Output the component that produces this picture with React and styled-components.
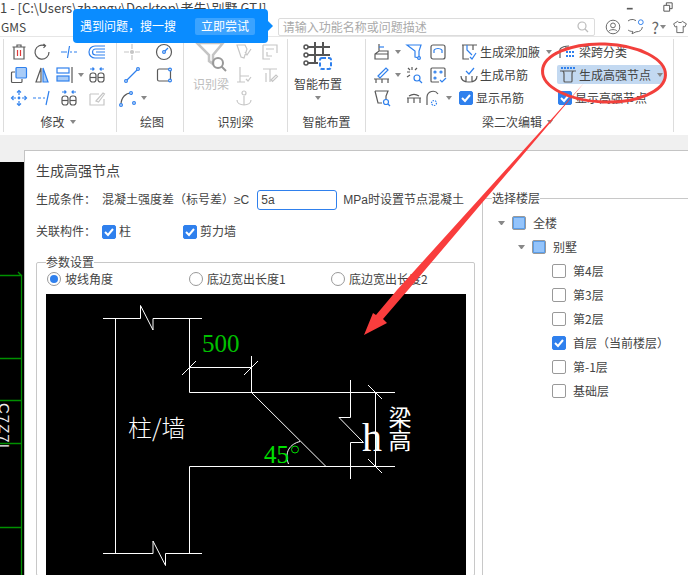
import React from 'react';
import styled, { createGlobalStyle } from 'styled-components';

const GlobalStyle = createGlobalStyle`
  html, body { margin: 0; padding: 0; background: #fff; }
  * { box-sizing: border-box; }
`;

const Page = styled.div`
  position: relative;
  width: 688px;
  height: 575px;
  overflow: hidden;
  display: flex;
  flex-direction: column;
  background: #fff;
  color: #333;
  font: 12px/1 "Noto Sans CJK SC", "Noto Sans", sans-serif;
`;

const TitleBar = styled.div`
  height: 14px;
  margin-bottom: 4px;
  flex: none;
  display: flex;
  align-items: center;
  justify-content: space-between;
  padding-right: 15px;
  font-size: 13px;
  color: #444;
  white-space: nowrap;
`;

const WindowButtons = styled.div`
  display: flex;
  align-items: center;
  gap: 27px;
`;

const MenuBar = styled.div`
  height: 19px;
  flex: none;
  display: flex;
  align-items: center;
  border-bottom: 1px solid #e6e6e6;
`;

const MenuName = styled.span`
  width: 279px;
  padding-left: 1px;
  font-size: 12px;
  color: #444;
`;

const SearchBox = styled.div`
  width: 319px;
  height: 18px;
  display: flex;
  align-items: center;
  justify-content: space-between;
  padding: 0 5px 0 4px;
  border: 1px solid #dcdcdc;
  border-radius: 2px;
  color: #aaa;
`;

const HelpIcons = styled.div`
  display: flex;
  align-items: center;
  gap: 7px;
  margin-left: 10px;
  color: #666;
`;

const HelpMark = styled.span`
  display: flex;
  align-items: center;
  gap: 1px;
  margin-right: -1px;
  font-size: 16px;
`;

const Tooltip = styled.div`
  position: absolute;
  left: 73px;
  top: 9px;
  width: 195px;
  height: 34px;
  display: flex;
  align-items: center;
  gap: 19px;
  padding-left: 7px;
  border-radius: 4px;
  background: #0a8cff;
  color: #fff;

  &::after {
    content: '';
    position: absolute;
    left: 100%;
    top: 12px;
    border: 5px solid transparent;
    border-left-color: #0a8cff;
    border-right-width: 0;
  }
`;

const TooltipButton = styled.span`
  width: 60px;
  height: 17px;
  display: flex;
  align-items: center;
  justify-content: center;
  border-radius: 2px;
  background: rgba(255, 255, 255, 0.2);
`;

const Ribbon = styled.div`
  height: 98px;
  flex: none;
  display: flex;
  padding-left: 3px;
`;

const Group = styled.div`
  width: ${(p) => p.$width}px;
  flex: none;
  display: flex;
  flex-direction: column;
  margin: 2px 0 3px;
  border-left: 1px solid #ddd;
`;

const GroupBody = styled.div`
  height: 71px;
  margin-top: 1px;
  display: flex;
  padding-left: ${(p) => p.$pad || 0}px;
`;

const GroupLabel = styled.div`
  height: 20px;
  margin-top: 1px;
  display: flex;
  align-items: center;
  justify-content: center;
  gap: 5px;
  padding-left: ${(p) => Math.max(p.$shift || 0, 0)}px;
  padding-right: ${(p) => Math.max(-(p.$shift || 0), 0)}px;
  font-size: 12px;
  color: #444;
`;

const ToolGrid = styled.div`
  display: grid;
  grid-template-columns: ${(p) => p.$cols};
  grid-auto-rows: 23px;
`;

const Tool = styled.span`
  display: flex;
  align-items: center;
  justify-content: ${(p) => (p.$start ? 'flex-start' : 'center')};
`;

const Caret = styled.i`
  display: inline-block;
  flex: none;
  margin-left: ${(p) => p.$gap || 0}px;
  border: 3.5px solid transparent;
  border-top: 4px solid #888;
  border-bottom-width: 0;
`;

const BigTool = styled.div`
  width: ${(p) => p.$width}px;
  flex: none;
  display: flex;
  flex-direction: column;
  align-items: center;
  gap: 6px;
  color: ${(p) => (p.$muted ? '#bdbdbd' : '#444')};
`;

const CommandColumn = styled.div`
  display: flex;
  flex-direction: column;
  width: ${(p) => p.$width}px;
  flex: none;
  margin-left: ${(p) => p.$left || 0}px;
`;

const Command = styled.div`
  height: 23px;
  display: flex;
  align-items: center;
  gap: 1px;
  padding-left: ${(p) => p.$pad || 0}px;
  white-space: nowrap;
  color: #444;
`;

const ActiveCommand = styled(Command)`
  height: 19px;
  margin: 2px 0;
  width: 107px;
  background: #c3d9f1;
  border-radius: 2px;
`;

const CheckCommand = styled(Command)`
  gap: 3px;
`;

const Box = styled.span`
  width: 14px;
  height: 14px;
  flex: none;
  display: inline-flex;
  align-items: center;
  justify-content: center;
  border-radius: 2px;
  border: 1px solid ${(p) => (p.$state === 'checked' ? '#2f80ed' : '#999')};
  background: ${(p) => (p.$state === 'checked' ? '#2f80ed' : '#fff')};

  &::before {
    content: '';
    display: ${(p) => (p.$state === 'mixed' ? 'block' : 'none')};
    width: 10px;
    height: 10px;
    background: #94c4fb;
    border: 1px solid #5c9ee8;
  }
`;

const Workspace = styled.div`
  flex: 1;
  min-height: 0;
  display: flex;
  background: #f0f0f0;
`;

const LeftCanvas = styled.div`
  width: 24px;
  flex: none;
  margin-top: 27px;
  background: #000;
`;

const Dialog = styled.div`
  flex: 1;
  min-width: 0;
  margin-top: 15px;
  padding: 9px 0 0 11px;
  background: #fff;
  border-top: 1px solid #c4c4c4;
  border-left: 1px solid #c4c4c4;
`;

const DialogTitle = styled.div`
  height: 20px;
  display: flex;
  align-items: center;
  font-size: 14px;
  color: #444;
`;

const Columns = styled.div`
  margin-top: 10px;
  display: flex;
  gap: 7px;
`;

const LeftColumn = styled.div`
  width: 439px;
  flex: none;
`;

const RightColumn = styled.div`
  width: 260px;
  flex: none;
`;

const FormRow = styled.div`
  height: 20px;
  margin-bottom: 12px;
  display: flex;
  align-items: center;
  font-family: "Liberation Sans", "Noto Sans CJK SC", sans-serif;
  white-space: nowrap;
  color: #444;
`;

const FormLabel = styled.span`
  width: 66px;
  flex: none;
`;

const ValueInput = styled.div`
  width: 80px;
  height: 20px;
  margin: 0 6px 0 8px;
  padding-left: 3px;
  display: flex;
  align-items: center;
  border: 1px solid #2f80ed;
  border-radius: 3px;
`;

const CheckLabel = styled.span`
  width: ${(p) => p.$width}px;
  display: flex;
  align-items: center;
  gap: 3px;
`;

const Fieldset = styled.fieldset`
  margin: 0;
  padding: 0;
  min-width: 0;
  border: 1px solid #c8c8c8;
  border-radius: 2px;
  color: #444;
`;

const Legend = styled.legend`
  margin-left: 9px;
  padding: 0;
  font-size: 12px;
  line-height: 16px;
`;

const RadioRow = styled.div`
  height: 18px;
  padding-left: 10px;
  display: grid;
  grid-template-columns: 142px 142px 1fr;
  align-items: center;
  white-space: nowrap;
`;

const RadioLabel = styled.span`
  display: flex;
  align-items: center;
  gap: 4px;
`;

const Radio = styled.i`
  width: 14px;
  height: 14px;
  flex: none;
  display: flex;
  align-items: center;
  justify-content: center;
  border: 1px solid #999;
  border-radius: 50%;

  &::after {
    content: '';
    display: ${(p) => (p.$on ? 'block' : 'none')};
    width: 8px;
    height: 8px;
    border-radius: 50%;
    background: #2f80ed;
  }
`;

const Diagram = styled.svg`
  display: block;
  width: 420px;
  height: 281px;
  margin: 6px 0 0 9px;
  background: #000;
`;

const Tree = styled.div`
  margin-top: 5px;
  height: 400px;
`;

const TreeRow = styled.div`
  height: 24px;
  display: flex;
  align-items: center;
  padding-left: ${(p) => 15 + p.$level * 20}px;
  font-size: 12px;
  color: #444;
`;

const TreeArrow = styled.i`
  width: 7px;
  margin-right: 7px;
  flex: none;
  border: 3.5px solid transparent;
  border-top: 4px solid ${(p) => (p.$hidden ? 'transparent' : '#888')};
  border-bottom-width: 0;
`;

const TreeText = styled.span`
  margin-left: 7px;
`;

const Annotation = styled.svg`
  position: absolute;
  left: 0;
  top: 0;
  pointer-events: none;
`;

const BLUE = '#2f80ed';
const DARK = '#5a5a5a';
const MUTED = '#c6c6c6';

const Ico = ({ size = 20, color = DARK, box = 20, children }) => (
  <svg width={size} height={size} viewBox={`0 0 ${box} ${box}`} fill="none" stroke={color} strokeWidth="1.2" style={{ flex: 'none' }}>
    {children}
  </svg>
);

const Dot = ({ x, y, c = BLUE }) => <circle cx={x} cy={y} r="1.4" fill="#fff" stroke={c} />;

const ArrowPair = () => (
  <>
    <path d="M3 4h4M5.500 2.500 7 4 5.500 5.500M17 4h-4M14.500 2.500 13 4l1.500 1.500" stroke={BLUE} />
    <rect x="3" y="8" width="6" height="9" rx="2.500" />
    <path d="M3 12.500h6" />
    <rect x="11" y="8" width="6" height="9" rx="2.500" />
    <path d="M11 12.500h6" />
  </>
);

const icons = {
  trash: (
    <>
      <path d="M3.500 5h13M8 5V3h4v2M5 5v12h10V5" />
      <path d="M8.500 8v6M11.500 8v6" stroke="#e03b3b" />
    </>
  ),
  rotate: <path d="M13 3.800A7 7 0 1 0 17 10M11.500 2l2 1.800-2 2" />,
  breakLine: <path d="M2 10h6M11 10h2M15 10h3M10.500 4 8.500 16" stroke={BLUE} />,
  offset: <path d="M18 4H8a6 6 0 0 0 0 12h10M18 7H8.500a3 3 0 0 0 0 6H18M18 10H9" stroke={BLUE} />,
  copy: (
    <>
      <rect x="7" y="2.500" width="10.500" height="10.500" rx="1" fill="#a9ccf7" stroke={BLUE} />
      <path d="M6 7H3.500a1 1 0 0 0-1 1v8.500a1 1 0 0 0 1 1H12a1 1 0 0 0 1-1V14" />
    </>
  ),
  mirror: (
    <>
      <path d="M9 3 4 17h5z" />
      <path d="M11 3l5 14h-5z" fill="#a9ccf7" stroke={BLUE} />
    </>
  ),
  align: (
    <>
      <rect x="2" y="3" width="12" height="5" stroke={BLUE} />
      <rect x="2" y="11" width="12" height="5" fill="#a9ccf7" stroke={BLUE} />
      <path d="M17 2v16" />
    </>
  ),
  split: <ArrowPair />,
  move: (
    <>
      <path d="M10 3v4M10 13v4M3 10h4M13 10h4" stroke={BLUE} />
      <path d="M8 4.500 10 2.500l2 2M8 15.500l2 2 2-2M4.500 8l-2 2 2 2M15.500 8l2 2-2 2" stroke={BLUE} />
      <circle cx="10" cy="10" r="0.800" fill={BLUE} stroke={BLUE} />
    </>
  ),
  extend: <path d="M1 10h3M6 10h3M11 10h2M17 3l-3 14" stroke={BLUE} />,
  note: <path d="M3 6h9M3 6v11h14v-6M9 13l7-8 1.500 1-6 8z" stroke={MUTED} />,
  crossPoint: (
    <>
      <path d="M10 2v5M10 13v5M2 10h5M13 10h5" stroke={MUTED} />
      <circle cx="10" cy="10" r="1.500" fill={MUTED} stroke={MUTED} />
    </>
  ),
  circlePoint: (
    <>
      <circle cx="10" cy="10" r="7.500" />
      <path d="M10 10l4-4" stroke={BLUE} />
      <Dot x={10} y={10} />
    </>
  ),
  line: (
    <>
      <path d="M4 16 16 4" stroke={BLUE} />
      <Dot x={4} y={16} />
      <Dot x={16} y={4} />
    </>
  ),
  rect: (
    <>
      <rect x="3.500" y="4" width="13" height="12" rx="1.500" />
      <Dot x={16} y={4.500} />
      <Dot x={16} y={15.500} />
    </>
  ),
  arc: (
    <>
      <path d="M3 17C3 9 8 5 13 5" />
      <Dot x={3} y={17} />
      <Dot x={13} y={5} />
      <Dot x={16} y={15} />
    </>
  ),
  check1: <path d="M3 3h8l2 4-3 9-3-1zM11 10l2 3 4-6" stroke={MUTED} />,
  find1: <path d="M3 3h14v8M3 3v14h7M6 7h8M7 10v4h5" stroke={MUTED} />,
  bar1: <path d="M6 2v9h9M3 17h8M6 11v6M12 14l2 2 3-4" stroke={MUTED} />,
  bar2: <path d="M3 4h14M10 4v13M6 8v9M11 15l5-5 1.500 1.500-5 5z" stroke={MUTED} />,
  anchor: <path d="M3 12c0 3 3 5 7 5s7-2 7-5M10 8v9M8 5a2 2 0 1 0 4 0 2 2 0 1 0-4 0" stroke={MUTED} />,
  beamStack: (
    <>
      <path d="M7 2v7h7M3 17v-5l4-3h9v8zM3 12h13" />
      <path d="M7 5h5" stroke={BLUE} />
    </>
  ),
  funnel: (
    <>
      <path d="M3 3h14l-2 6v7l-4-1V9z" stroke={BLUE} />
      <Dot x={15} y={16} />
    </>
  ),
  beamBox: (
    <>
      <rect x="3" y="3" width="14" height="14" rx="2" />
      <path d="M6 8c2-2 6-2 8 0M6 8v3M14 8v3" stroke={BLUE} />
    </>
  ),
  pen: (
    <>
      <path d="M6 11 14 3l2 2-8 8z" stroke={BLUE} />
      <path d="M2 14h15M4 14v4M10 14v4M16 14v4" />
    </>
  ),
  scatter: (
    <>
      <path d="M8 2v3M3 7h3M4 3l2 2M3 12l3-2M13 3l-2 2" />
      <circle cx="13" cy="13" r="3" stroke={BLUE} />
      <path d="M15 15l3 3" stroke={BLUE} />
    </>
  ),
  dotsCheck: (
    <>
      <path d="M11 17H4a1 1 0 0 1-1-1V4a1 1 0 0 1 1-1h12a1 1 0 0 1 1 1v8" />
      <circle cx="7" cy="7" r="1" stroke={BLUE} />
      <circle cx="13" cy="7" r="1" stroke={BLUE} />
      <circle cx="7" cy="13" r="1" stroke={BLUE} />
      <path d="M12 15l2 2 4-4" stroke={BLUE} />
    </>
  ),
  funnelFind: (
    <>
      <path d="M3 3h13l-2 5v4M3 3l3 12h4" />
      <circle cx="14" cy="14" r="2.500" stroke={BLUE} />
      <path d="M16 16l2 2" stroke={BLUE} />
    </>
  ),
  arch: <path d="M5 8c3-2 7-2 10 0M3 10h14M4 10v5M10 10v5M16 10v5" />,
  omega: (
    <>
      <path d="M4 17V9a6 6 0 0 1 11 -3" />
      <circle cx="11" cy="15" r="2.500" stroke={BLUE} strokeDasharray="1.500 1" />
    </>
  ),
  haunch: (
    <>
      <path d="M3 3h15M4 3v14h6M14 3v5" />
      <path d="M8 3v5l5 5M11 15l2 2 4-6" stroke={BLUE} />
    </>
  ),
  hanger: (
    <>
      <path d="M2 11c0 4 3 6 8 6s8-2 8-6M7 11v6M13 11v6" />
      <path d="M7 6l3 3 5-6" stroke={BLUE} />
    </>
  ),
  span: (
    <>
      <path d="M2 7c2-2 5-3 9-3M2 7v9M8 5v2" />
      <path d="M8 10h2M11 10h2M14 10h2M8 14h2M11 14h2M14 14h2" stroke={BLUE} strokeWidth="2" />
    </>
  ),
  highNode: (
    <>
      <path d="M3 3h14" stroke={BLUE} strokeDasharray="2 1" strokeWidth="2" />
      <path d="M2 6h16M4 6c1.500 0 2 1 2 3v7c0 1 .5 1 1 1h6c.5 0 1 0 1-1V9c0-2 .5-3 2-3" />
    </>
  ),
};

const Icon = ({ name, color }) => <Ico color={color}>{icons[name]}</Ico>;

const Check = () => (
  <svg width="10" height="10" viewBox="0 0 10 10" fill="none" stroke="#fff" strokeWidth="2">
    <path d="M1 5l3 3 5-6" />
  </svg>
);

const CheckBox = ({ state = 'empty' }) => <Box $state={state}>{state === 'checked' && <Check />}</Box>;

const GridTools = ({ cols, items }) => (
  <ToolGrid $cols={cols}>
    {items.map((item, i) => (
      <Tool key={i} $start={item.start}>
        {item.name && <Icon name={item.name} color={item.color} />}
        {item.caret && <Caret $gap={3} />}
      </Tool>
    ))}
  </ToolGrid>
);

const modifyTools = [
  { name: 'trash' }, { name: 'rotate' }, { name: 'breakLine' }, { name: 'offset' },
  { name: 'copy' }, { name: 'mirror' }, { name: 'align', caret: true }, { name: 'split' },
  { name: 'move' }, { name: 'extend' }, { name: 'split' }, { name: 'note' },
];

const drawTools = [
  { name: 'crossPoint' }, { name: 'circlePoint' },
  { name: 'line' }, { name: 'rect' },
  { name: 'arc', caret: true }, {},
];

const recogniseTools = [
  { name: 'check1', color: MUTED }, { name: 'find1', color: MUTED },
  { name: 'bar1', color: MUTED }, { name: 'bar2', color: MUTED },
  { name: 'anchor', color: MUTED }, {},
];

const beamTools = [
  { name: 'beamStack', caret: true, start: true }, { name: 'funnel' }, { name: 'beamBox' },
  { name: 'pen', caret: true, start: true }, { name: 'scatter' }, { name: 'dotsCheck' },
  { name: 'funnelFind', start: true }, { name: 'arch' }, { name: 'omega', caret: true },
];

const floors = [
  { label: '第4层' },
  { label: '第3层' },
  { label: '第2层' },
  { label: '首层（当前楼层）', state: 'checked' },
  { label: '第-1层' },
  { label: '基础层' },
];

const line = { stroke: '#fff', strokeWidth: 1, fill: 'none' };

const NodeDiagram = () => (
  <Diagram viewBox="46 294 420 281">
    <g {...line}>
      <path d="M103 318.500H140.500V305.500L153 330V318.500H202" />
      <path d="M103 553.500H153V541L165.500 565.500V553.500H202" />
      <path d="M115.500 318.500V553.500M189.500 318.500V392.500H395M189.500 466.500H395M189.500 466.500V553.500" />
      <path d="M189.500 367.500H251.500M251.500 356V392.500M182 375 196 361M244 375 258 361" />
      <path d="M251.500 392.500 326 466.500" />
      <path d="M288.500 464C284 452 290 444 300 441.500" />
      <path d="M350.500 380V417.500H339L363.500 442.500H350.500V479" />
      <path d="M375.500 392.500V466.500M368 385 382 399M368 459 382 473" />
    </g>
    <text x="202" y="352" fill="#00c000" fontFamily="Liberation Serif, serif" fontSize="25">500</text>
    <text x="264" y="463" fill="#00e000" fontFamily="Liberation Serif, serif" fontSize="25">45</text>
    <circle cx="295" cy="449.500" r="3.500" stroke="#00e000" fill="none" />
    <text x="128" y="437" fill="#fff" fontFamily="Noto Sans CJK SC, sans-serif" fontWeight="300" fontSize="24">柱/墙</text>
    <text x="362" y="451" fill="#fff" fontFamily="Liberation Serif, serif" fontSize="40">h</text>
    <text x="400" y="406" fill="#fff" fontFamily="Noto Sans CJK SC, sans-serif" fontSize="23" style={{ writingMode: 'vertical-rl' }}>梁高</text>
  </Diagram>
);

const App = () => (
  <Page>
    <GlobalStyle />
    <TitleBar>
      <span>1 - [C:\Users\zhangy\Desktop\老朱\别墅 GTJ]</span>
      <WindowButtons>
        <Ico size={10} box={12}><path d="M1 8h7" strokeWidth="2" /></Ico>
        <Ico size={10} box={12}><path d="M1 4h7v7H1zM4 4V1h7v7H8" /></Ico>
      </WindowButtons>
    </TitleBar>
    <MenuBar>
      <MenuName>GMS</MenuName>
      <SearchBox>
        <span>请输入功能名称或问题描述</span>
        <Ico size={12} box={12} color="#bbb"><circle cx="5" cy="5" r="4" /><path d="M8 8l3 3" /></Ico>
      </SearchBox>
      <HelpIcons>
        <Ico size={16} color="#666"><circle cx="10" cy="10" r="8.500" /><circle cx="10" cy="8" r="3" /><path d="M4.500 15.500c2-3 9-3 11 0" /></Ico>
        <Ico size={16} color="#666"><path d="M10 2a8 7.500 0 1 0-4 13.500l-1 3 5-2.500a8 7 0 0 0 8-6" /><circle cx="16" cy="4" r="3" stroke={BLUE} /></Ico>
        <HelpMark>?<Caret /></HelpMark>
        <Ico size={16} color="#666"><path d="M7 3 2 6l2 4 2-1v8h8V9l2 1 2-4-5-3c-1 2-5 2-6 0z" /></Ico>
      </HelpIcons>
    </MenuBar>

    <Ribbon>
      <Group $width={113}>
        <GroupBody $pad={3}>
          <GridTools cols="23px 23px 32px 23px" items={modifyTools} />
        </GroupBody>
        <GroupLabel $shift={-4}>修改 <Caret /></GroupLabel>
      </Group>
      <Group $width={67}>
        <GroupBody $pad={3}>
          <GridTools cols="24px 40px" items={drawTools} />
        </GroupBody>
        <GroupLabel $shift={4}>绘图</GroupLabel>
      </Group>
      <Group $width={104}>
        <GroupBody $pad={5}>
          <BigTool $width={44} $muted>
            <Ico size={32} box={32} color="#c4c4c4">
              <path d="M2 3h26L18 15v9l-4-3V15z" strokeWidth="2.500" />
              <circle cx="23" cy="23" r="5" stroke="#999" strokeWidth="2" />
              <path d="M26.500 26.500 31 31" stroke="#999" strokeWidth="2" />
            </Ico>
            <span>识别梁</span>
          </BigTool>
          <GridTools cols="22px 30px" items={recogniseTools} />
        </GroupBody>
        <GroupLabel>识别梁</GroupLabel>
      </Group>
      <Group $width={78}>
        <GroupBody $pad={6}>
          <BigTool $width={48}>
            <Ico size={32} box={32} color="#555">
              <path d="M13 2v20M21 2v14M6 7h22M6 15h22M6 23h10" strokeWidth="2" />
              <circle cx="4" cy="7" r="2" strokeWidth="1.500" />
              <circle cx="4" cy="15" r="2" strokeWidth="1.500" />
              <circle cx="4" cy="23" r="2" strokeWidth="1.500" />
              <rect x="18" y="18" width="11" height="11" rx="2" stroke={BLUE} strokeWidth="2" strokeDasharray="4 2" />
            </Ico>
            <span>智能布置</span>
            <Caret />
          </BigTool>
        </GroupBody>
        <GroupLabel>智能布置</GroupLabel>
      </Group>
      <Group $width={308}>
        <GroupBody $pad={6}>
          <GridTools cols="30px 23px 25px" items={beamTools} />
          <CommandColumn $width={98} $left={9}>
            <Command><Icon name="haunch" />生成梁加腋<Caret $gap={5} /></Command>
            <Command><Icon name="hanger" />生成吊筋</Command>
            <CheckCommand><CheckBox state="checked" />显示吊筋</CheckCommand>
          </CommandColumn>
          <CommandColumn $width={110}>
            <Command $pad={1}><Icon name="span" />梁跨分类</Command>
            <ActiveCommand $pad={1}><Icon name="highNode" />生成高强节点<Caret $gap={5} /></ActiveCommand>
            <CheckCommand $pad={1}><CheckBox state="checked" />显示高强节点</CheckCommand>
          </CommandColumn>
        </GroupBody>
        <GroupLabel $shift={-4}>梁二次编辑 <Caret /></GroupLabel>
      </Group>
      <Group $width={15} />
    </Ribbon>

    <Workspace>
      <LeftCanvas>
        <svg width="24" height="413" viewBox="0 162 24 413" style={{ display: 'block' }}>
          <path d="M0 275.500H21.500V575M0 358.500H21.500M0 400.500H21.500M0 443.500H21.500M0 527.500H21.500M18 272l4 4" stroke="#009000" strokeWidth="1.300" fill="none" />
          <text x="0" y="0" transform="translate(-1 403) rotate(90)" fill="#eee" fontFamily="Liberation Sans, sans-serif" fontSize="15" letterSpacing="1">C7Z7I</text>
        </svg>
      </LeftCanvas>
      <Dialog>
        <DialogTitle>生成高强节点</DialogTitle>
        <Columns>
          <LeftColumn>
            <FormRow>
              <FormLabel>生成条件：</FormLabel>
              <span>混凝土强度差（标号差）≥C</span>
              <ValueInput>5a</ValueInput>
              <span>MPa时设置节点混凝土</span>
            </FormRow>
            <FormRow>
              <FormLabel>关联构件：</FormLabel>
              <CheckLabel $width={81}><CheckBox state="checked" />柱</CheckLabel>
              <CheckLabel $width={80}><CheckBox state="checked" />剪力墙</CheckLabel>
            </FormRow>
            <Fieldset>
              <Legend>参数设置</Legend>
              <RadioRow>
                <RadioLabel><Radio $on />坡线角度</RadioLabel>
                <RadioLabel><Radio />底边宽出长度1</RadioLabel>
                <RadioLabel><Radio />底边宽出长度2</RadioLabel>
              </RadioRow>
              <NodeDiagram />
            </Fieldset>
          </LeftColumn>
          <RightColumn>
            <Fieldset>
              <Legend>选择楼层</Legend>
              <Tree>
                <TreeRow $level={0}><TreeArrow /><CheckBox state="mixed" /><TreeText>全楼</TreeText></TreeRow>
                <TreeRow $level={1}><TreeArrow /><CheckBox state="mixed" /><TreeText>别墅</TreeText></TreeRow>
                {floors.map((floor) => (
                  <TreeRow key={floor.label} $level={2}>
                    <TreeArrow $hidden />
                    <CheckBox state={floor.state} />
                    <TreeText>{floor.label}</TreeText>
                  </TreeRow>
                ))}
              </Tree>
            </Fieldset>
          </RightColumn>
        </Columns>
      </Dialog>
    </Workspace>

    <Tooltip>
      <span>遇到问题，搜一搜</span>
      <TooltipButton>立即尝试</TooltipButton>
    </Tooltip>

    <Annotation width="688" height="575" viewBox="0 0 688 575">
      <ellipse cx="604" cy="73" rx="61.500" ry="29" fill="none" stroke="#f2403c" strokeWidth="3" transform="rotate(2 604 73)" />
      <polygon points="584,83 408,290 383,319 387,323 364,335 373,313 376,315 397,290" fill="#f93d3d" />
    </Annotation>
  </Page>
);

export default App;
